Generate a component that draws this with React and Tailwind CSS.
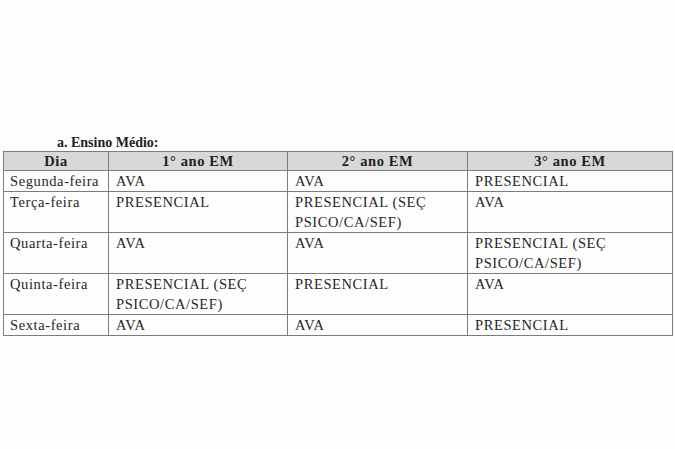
import React from "react";

const linhas = [
  { dia: "Segunda-feira", c1: ["AVA"], c2: ["AVA"], c3: ["PRESENCIAL"] },
  { dia: "Terça-feira", c1: ["PRESENCIAL"], c2: ["PRESENCIAL (SEÇ", "PSICO/CA/SEF)"], c3: ["AVA"] },
  { dia: "Quarta-feira", c1: ["AVA"], c2: ["AVA"], c3: ["PRESENCIAL (SEÇ", "PSICO/CA/SEF)"] },
  { dia: "Quinta-feira", c1: ["PRESENCIAL (SEÇ", "PSICO/CA/SEF)"], c2: ["PRESENCIAL"], c3: ["AVA"] },
  { dia: "Sexta-feira", c1: ["AVA"], c2: ["AVA"], c3: ["PRESENCIAL"] },
];

function Cel({ linhas }) {
  return (
    <td className="border border-[#7c7c7c] px-[7px] align-top leading-[20px]">
      {linhas.map((l, i) => (
        <div key={i}>{l}</div>
      ))}
    </td>
  );
}

export default function App() {
  return (
    <div
      className="w-[675px] h-[449px] bg-[#fdfdfd] text-[#262626] pt-[134px] pl-[3px]"
      style={{ fontFamily: '"Liberation Serif", "Times New Roman", serif' }}
    >
      <div className="pl-[54px] text-[14px] font-bold leading-[17px] text-[#1f1f1f]">a. Ensino Médio:</div>
      <table className="border-collapse w-[669px] table-fixed text-[14.5px] tracking-[0.6px]">
        <colgroup>
          <col className="w-[105px]" />
          <col className="w-[179px]" />
          <col className="w-[180px]" />
          <col className="w-[205px]" />
        </colgroup>
        <thead>
          <tr className="bg-[#d8d8d8] text-[#1f1f1f]">
            <th className="border border-[#7c7c7c] leading-[18px] font-bold">Dia</th>
            <th className="border border-[#7c7c7c] leading-[18px] font-bold">1° ano EM</th>
            <th className="border border-[#7c7c7c] leading-[18px] font-bold">2° ano EM</th>
            <th className="border border-[#7c7c7c] leading-[18px] font-bold">3° ano EM</th>
          </tr>
        </thead>
        <tbody>
          {linhas.map(r => (
            <tr key={r.dia}>
              <td className="border border-[#7c7c7c] pl-[6px] pr-0 align-top leading-[20px] whitespace-nowrap">{r.dia}</td>
              <Cel linhas={r.c1} />
              <Cel linhas={r.c2} />
              <Cel linhas={r.c3} />
            </tr>
          ))}
        </tbody>
      </table>
    </div>
  );
}
